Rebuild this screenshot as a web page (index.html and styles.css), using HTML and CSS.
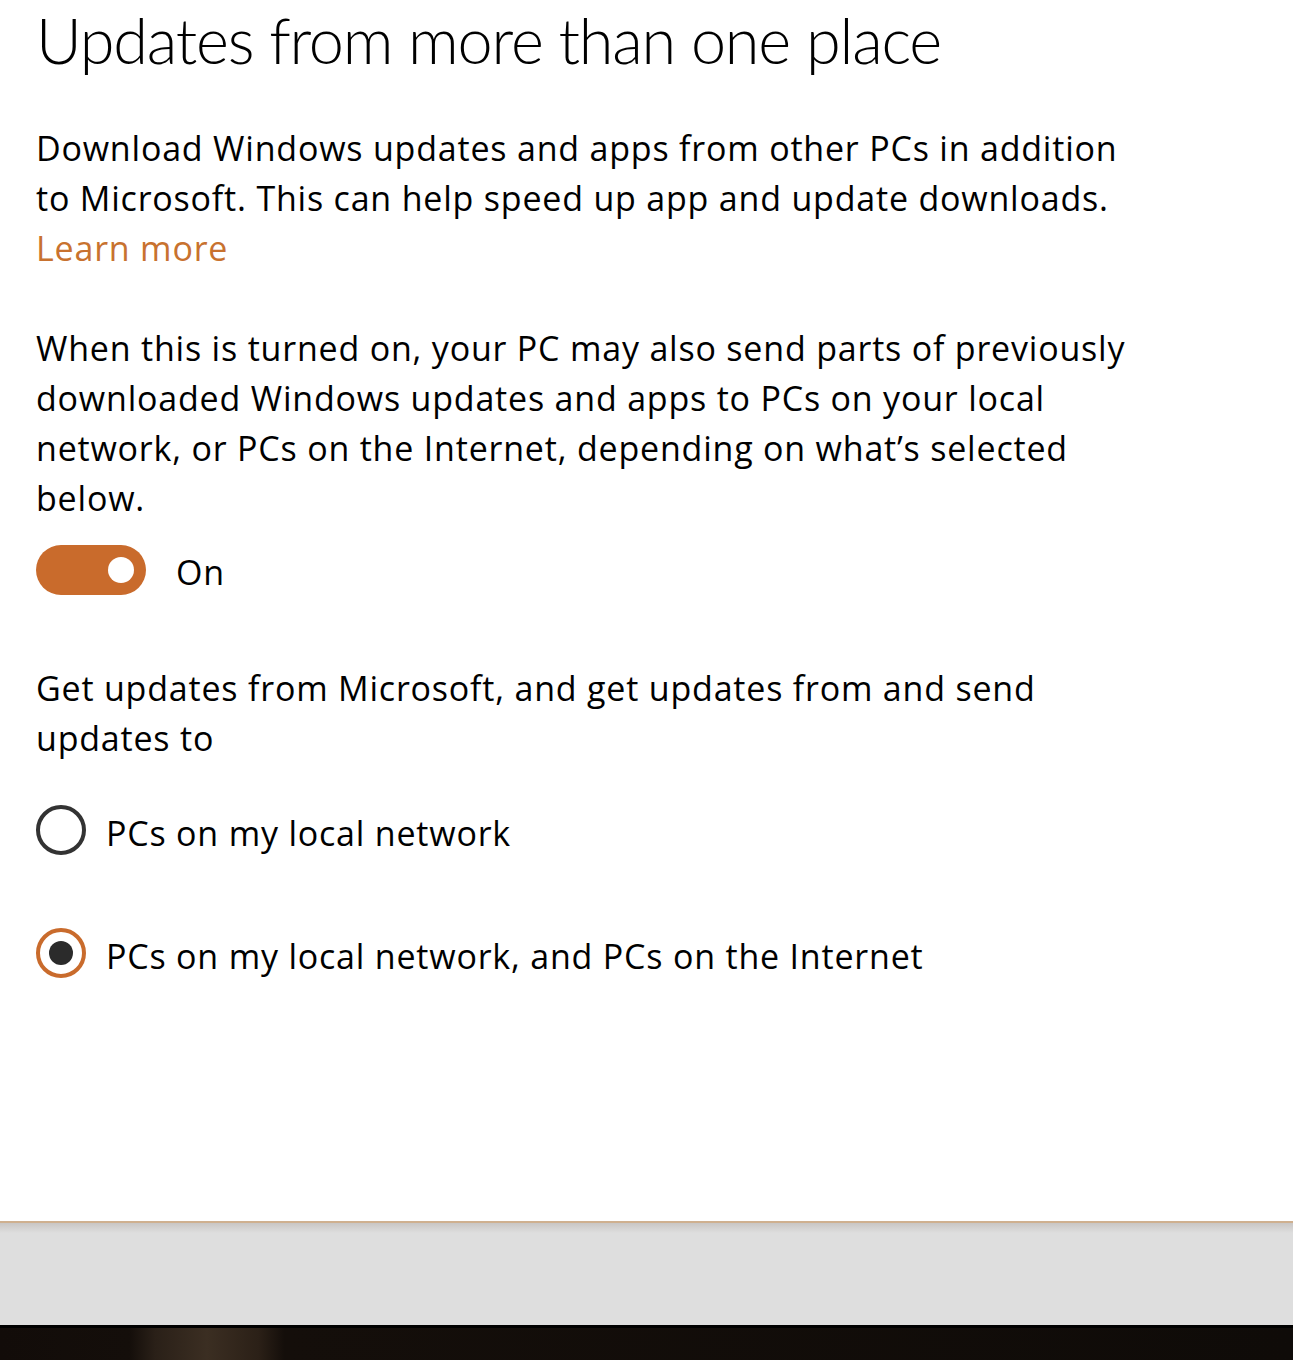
FILE: index.html
```html
<!DOCTYPE html>
<html lang="en">
<head>
    <meta charset="UTF-8">
    <meta name="viewport" content="width=device-width, initial-scale=1.0">
    <title>Delivery Optimization</title>
    <link rel="stylesheet" href="styles.css">
</head>
<body>
<div class="panel">
    <h1 class="title">Updates from more than one place</h1>

    <p class="text">Download Windows updates and apps from other PCs in addition<br>
        to Microsoft. This can help speed up app and update downloads.<br>
        <a class="link" href="#">Learn more</a></p>

    <p class="text">When this is turned on, your PC may also send parts of previously<br>
        downloaded Windows updates and apps to PCs on your local<br>
        network, or PCs on the Internet, depending on what&rsquo;s selected<br>
        below.</p>

    <div class="toggle-row">
        <span class="toggle"><span class="knob"></span></span>
        <span class="toggle-label">On</span>
    </div>

    <p class="text question">Get updates from Microsoft, and get updates from and send<br>
        updates to</p>

    <div class="options">
        <label class="option">
            <span class="radio"></span>
            <span class="option-label">PCs on my local network</span>
        </label>
        <label class="option">
            <span class="radio checked"></span>
            <span class="option-label">PCs on my local network, and PCs on the Internet</span>
        </label>
    </div>
</div>
<div class="footer">
    <div class="bar"></div>
    <div class="desktop"></div>
</div>
</body>
</html>
```

FILE: styles.css
```css
body {
    margin: 0;
    padding: 0;
    background-color: #ffffff;
    font-family: "Open Sans", "Noto Sans", sans-serif;
    color: #000;
}

.panel {
    height: 1221px;
    padding-left: 36px;
    box-sizing: border-box;
    overflow: hidden;
}

.title {
    margin: 0;
    font-family: Lato, "Open Sans", sans-serif;
    font-size: 63px;
    font-weight: 300;
    line-height: 80px;
    letter-spacing: -1.2px;
    white-space: nowrap;
}

.text {
    margin: 0;
    font-size: 34px;
    line-height: 50px;
    letter-spacing: 0.8px;
    white-space: nowrap;
}

.text + .text {
    margin-top: 50px;
}

.title + .text {
    margin-top: 43px;
}

.link {
    color: #c8722f;
    text-decoration: none;
}

.toggle-row {
    display: flex;
    align-items: center;
    gap: 30px;
    margin-top: 22px;
    font-size: 34px;
    letter-spacing: 0.8px;
}

.toggle-label {
    padding-top: 4px;
}

.toggle {
    width: 110px;
    height: 50px;
    border-radius: 25px;
    background-color: #c96b2c;
    display: flex;
    align-items: center;
    justify-content: flex-end;
    padding-right: 12px;
    box-sizing: border-box;
}

.knob {
    width: 26px;
    height: 26px;
    border-radius: 50%;
    background-color: #fff;
}

.question {
    margin-top: 68px;
}

.options {
    display: flex;
    flex-direction: column;
    gap: 73px;
    margin-top: 42px;
}

.option {
    display: flex;
    align-items: center;
    gap: 20px;
    height: 50px;
    font-size: 34px;
    letter-spacing: 0.8px;
    line-height: 50px;
}

.option-label {
    padding-top: 5px;
}

.radio {
    width: 50px;
    height: 50px;
    border: 4px solid #333;
    border-radius: 50%;
    box-sizing: border-box;
    display: flex;
    align-items: center;
    justify-content: center;
}

.radio.checked {
    border-color: #c96b2c;
}

.radio.checked::after {
    content: "";
    width: 24px;
    height: 24px;
    border-radius: 50%;
    background-color: #2b2b2b;
}

.footer {
    height: 139px;
    display: flex;
    flex-direction: column;
}

.bar {
    height: 102px;
    border-top: 2px solid #cfb08f;
    background: linear-gradient(#c9c6c4, #dedede 10px);
    border-bottom: 3px solid #000;
}

.desktop {
    flex: 1;
    background: linear-gradient(90deg, #120c09 0%, #140e0a 10%, #2a2018 12%, #3b2e22 16%, #2b2017 20%, #140e0a 22%, #0f0b08 100%);
}
```
